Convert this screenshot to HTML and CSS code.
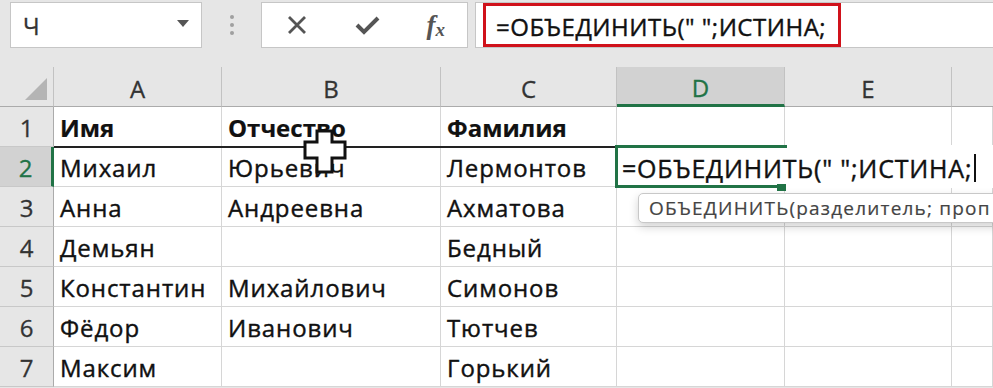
FILE: index.html
```html
<!DOCTYPE html>
<html lang="ru">
<head>
    <meta charset="UTF-8">
    <title>Excel - ОБЪЕДИНИТЬ</title>
    <link rel="stylesheet" href="styles.css">
</head>
<body>
    <div class="toolbar">
        <div class="namebox">
            <span class="name">Ч</span>
            <span class="drop"></span>
        </div>
        <div class="dots"><i></i><i></i><i></i></div>
        <div class="fbtns">
            <svg width="22" height="22" viewBox="0 0 22 22"><path d="M3 3 L19 19 M19 3 L3 19" stroke="#555" stroke-width="2.8" fill="none"/></svg>
            <svg width="26" height="22" viewBox="0 0 26 22"><path d="M3 11 L10 18 L24 4" stroke="#555" stroke-width="4" fill="none"/></svg>
            <span class="fx">f<span class="fx-x">x</span></span>
        </div>
        <div class="formula">
            <div class="formula-mark">=ОБЪЕДИНИТЬ(" ";ИСТИНА;</div>
        </div>
    </div>

    <div class="sheet">
        <div class="corner"><span class="tri"></span></div>
        <div class="colhead">A</div>
        <div class="colhead">B</div>
        <div class="colhead">C</div>
        <div class="colhead active">D</div>
        <div class="colhead">E</div>
        <div class="colhead last"></div>

        <div class="rowhead">1</div>
        <div class="cell bold">Имя</div>
        <div class="cell bold">Отчество</div>
        <div class="cell bold">Фамилия</div>
        <div class="cell"></div>
        <div class="cell"></div>
        <div class="cell"></div>

        <div class="rowhead active">2</div>
        <div class="cell">Михаил</div>
        <div class="cell">Юрьевич</div>
        <div class="cell">Лермонтов</div>
        <div class="cell edit-host">
            <div class="editor">=ОБЪЕДИНИТЬ(" ";ИСТИНА;<span class="caret"></span></div>
            <div class="handle"></div>
            <div class="tip">ОБЪЕДИНИТЬ(разделитель; проп</div>
        </div>
        <div class="cell"></div>
        <div class="cell"></div>

        <div class="rowhead">3</div>
        <div class="cell">Анна</div>
        <div class="cell">Андреевна</div>
        <div class="cell">Ахматова</div>
        <div class="cell"></div>
        <div class="cell"></div>
        <div class="cell"></div>

        <div class="rowhead">4</div>
        <div class="cell">Демьян</div>
        <div class="cell"></div>
        <div class="cell">Бедный</div>
        <div class="cell"></div>
        <div class="cell"></div>
        <div class="cell"></div>

        <div class="rowhead">5</div>
        <div class="cell">Константин</div>
        <div class="cell">Михайлович</div>
        <div class="cell">Симонов</div>
        <div class="cell"></div>
        <div class="cell"></div>
        <div class="cell"></div>

        <div class="rowhead">6</div>
        <div class="cell">Фёдор</div>
        <div class="cell">Иванович</div>
        <div class="cell">Тютчев</div>
        <div class="cell"></div>
        <div class="cell"></div>
        <div class="cell"></div>

        <div class="rowhead">7</div>
        <div class="cell">Максим</div>
        <div class="cell"></div>
        <div class="cell">Горький</div>
        <div class="cell"></div>
        <div class="cell"></div>
        <div class="cell"></div>

        <!-- линия над второй строкой и курсор выделения -->
        <div class="drag-line"></div>
        <svg class="cursor" width="44" height="46" viewBox="0 0 44 46">
            <path d="M14 2 H29 V13 H42 V29 H29 V43 H14 V29 H2 V13 H14 Z" fill="#fff" stroke="#111" stroke-width="3"/>
        </svg>
    </div>
</body>
</html>
```

FILE: styles.css
```css
body {
    margin: 0;
    width: 993px;
    height: 388px;
    overflow: hidden;
    background-color: #e6e6e6;
    font-family: "Open Sans", "Noto Sans", sans-serif;
    color: #111;
}

.toolbar {
    height: 67px;
    display: flex;
    align-items: flex-start;
    padding: 2px 0 0 10px;
    box-sizing: border-box;
    background-color: #e6e6e6;
}

.namebox {
    width: 192px;
    height: 46px;
    box-sizing: border-box;
    background-color: #fff;
    border: 1px solid #c6c6c6;
    display: flex;
    align-items: center;
    justify-content: space-between;
    padding: 0 12px 0 12px;
}

.name {
    font-size: 24px;
    color: #333;
    -webkit-text-stroke: 0.3px #333;
}

.drop {
    width: 0;
    height: 0;
    border-left: 6px solid transparent;
    border-right: 6px solid transparent;
    border-top: 7px solid #555;
    margin-bottom: 4px;
}

.dots {
    width: 59px;
    height: 46px;
    display: flex;
    flex-direction: column;
    align-items: center;
    justify-content: center;
    gap: 4px;
}

.dots i {
    display: block;
    width: 4px;
    height: 4px;
    border-radius: 50%;
    background-color: #a0a0a0;
}

.fbtns {
    width: 207px;
    height: 46px;
    box-sizing: border-box;
    background-color: #fff;
    border: 1px solid #c6c6c6;
    display: flex;
    align-items: center;
    padding: 0 22px 0 24px;
    justify-content: space-between;
}

.fx {
    font-family: "Liberation Serif", serif;
    font-style: italic;
    font-weight: bold;
    font-size: 27px;
    color: #555;
    line-height: 1;
}

.fx-x {
    font-size: 19px;
    position: relative;
    top: 2px;
}

.formula {
    flex: 1;
    height: 46px;
    margin-left: 7px;
    box-sizing: border-box;
    background-color: #fff;
    border: 1px solid #c6c6c6;
    border-right: none;
    padding: 0 0 0 7px;
    display: flex;
    align-items: center;
}

.formula-mark {
    width: 358px;
    height: 44px;
    box-sizing: border-box;
    border: 3px solid #d0121b;
    font-size: 24px;
    color: #111;
    -webkit-text-stroke: 0.4px #111;
    padding: 2px 0 0 10px;
    display: flex;
    align-items: center;
    white-space: nowrap;
    letter-spacing: 0.5px;
}

.sheet {
    position: relative;
    display: grid;
    grid-template-columns: 54px 168px 219px 176px 168px 167px 1fr;
    grid-template-rows: repeat(8, 40px);
}

.corner,
.colhead {
    background-color: #e6e6e6;
    border-bottom: 1px solid #ababab;
    border-right: 1px solid #c2c2c2;
    box-sizing: border-box;
}

.corner {
    position: relative;
}

.tri {
    position: absolute;
    right: 6px;
    bottom: 6px;
    width: 0;
    height: 0;
    border-left: 22px solid transparent;
    border-bottom: 22px solid #b4b4b4;
}

.colhead {
    font-size: 24px;
    color: #333;
    -webkit-text-stroke: 0.3px #333;
    padding-top: 4px;
    display: flex;
    align-items: center;
    justify-content: center;
}

.colhead.active {
    background-color: #d2d2d2;
    color: #217346;
    -webkit-text-stroke: 0.3px #217346;
    border-bottom: 3px solid #217346;
}

.colhead.last {
    border-right: none;
}

.rowhead {
    background-color: #e6e6e6;
    border-right: 1px solid #ababab;
    border-bottom: 1px solid #c8c8c8;
    box-sizing: border-box;
    font-size: 24px;
    color: #333;
    -webkit-text-stroke: 0.3px #333;
    padding-top: 2px;
    display: flex;
    align-items: center;
    justify-content: center;
}

.rowhead.active {
    background-color: #d2d2d2;
    color: #217346;
    -webkit-text-stroke: 0.3px #217346;
    border-right: 3px solid #217346;
}

.cell {
    background-color: #fff;
    border-right: 1px solid #d6d6d6;
    border-bottom: 1px solid #d6d6d6;
    box-sizing: border-box;
    font-size: 24px;
    -webkit-text-stroke: 0.4px #111;
    padding: 2px 0 0 6px;
    display: flex;
    align-items: center;
    white-space: nowrap;
    letter-spacing: 0.9px;
}

.bold {
    font-weight: bold;
    letter-spacing: 0;
    -webkit-text-stroke: 0.2px #111;
}

.edit-host {
    position: relative;
    overflow: visible;
    z-index: 2;
}

.editor {
    position: absolute;
    left: -2px;
    top: -2px;
    width: 380px;
    height: 43px;
    box-sizing: border-box;
    background-color: #fff;
    border-left: 3px solid #217346;
    padding: 2px 0 0 4px;
    display: flex;
    align-items: center;
    font-size: 25px;
    letter-spacing: 0.8px;
    white-space: nowrap;
}

.editor::before,
.editor::after {
    content: "";
    position: absolute;
    left: -3px;
    width: 172px;
    height: 3px;
    background-color: #217346;
}

.editor::before {
    top: 0;
}

.editor::after {
    bottom: 0;
    width: 164px;
}

.caret {
    display: inline-block;
    width: 2px;
    height: 28px;
    margin-left: 2px;
    background-color: #111;
}

.handle {
    position: absolute;
    left: 160px;
    top: 37px;
    width: 9px;
    height: 7px;
    background-color: #217346;
    z-index: 3;
}

.tip {
    position: absolute;
    left: 21px;
    top: 46px;
    width: 380px;
    height: 30px;
    padding: 0 0 0 10px;
    box-sizing: border-box;
    background-color: #fff;
    border: 1px solid #c8c8c8;
    border-radius: 5px;
    box-shadow: 0 4px 10px rgba(0, 0, 0, 0.18);
    font-size: 19px;
    color: #444;
    -webkit-text-stroke: 0.2px #444;
    display: flex;
    align-items: center;
    white-space: nowrap;
    letter-spacing: 1.2px;
}

.drag-line {
    position: absolute;
    left: 54px;
    top: 79px;
    width: 562px;
    height: 2px;
    background-color: #222;
    z-index: 1;
}

.cursor {
    position: absolute;
    left: 303px;
    top: 62px;
    z-index: 4;
}
```
